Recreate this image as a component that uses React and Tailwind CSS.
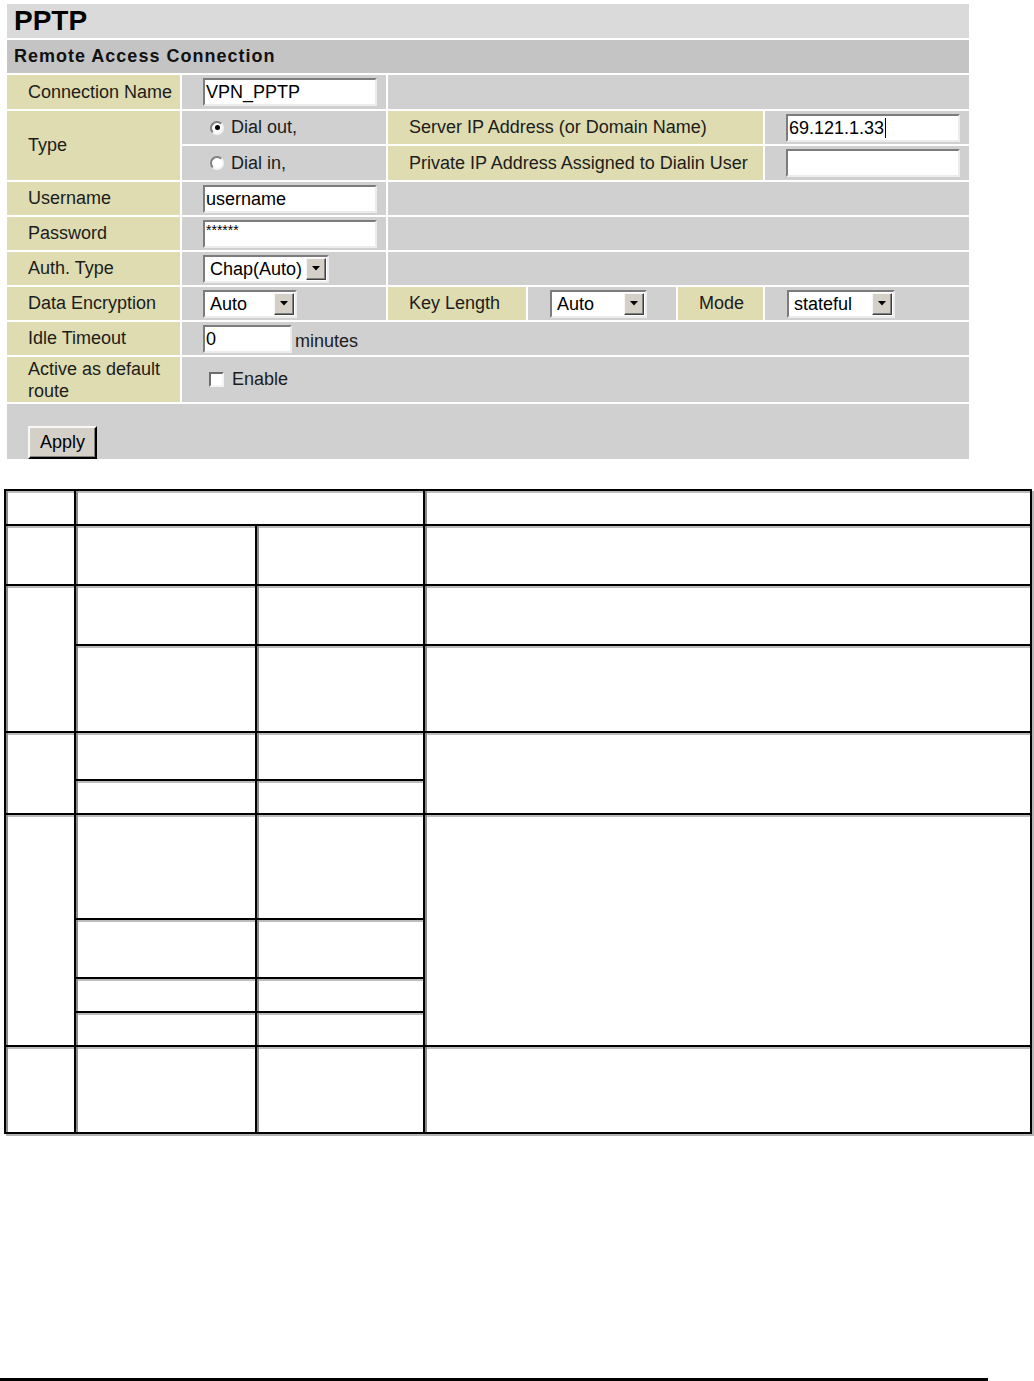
import React from "react";

const font = { fontFamily: '"Liberation Sans", Arial, sans-serif' };

function Tri() {
  return (
    <svg width="8" height="5" viewBox="0 0 8 5">
      <path d="M0 0 H8 L4 4.5 Z" fill="#000" />
    </svg>
  );
}

function Select({ w, value }) {
  return (
    <div className={`flex h-[28px] ${w} items-center border-2 border-[#7c7c7c] border-b-[#ececec] border-r-[#ececec] bg-white`}>
      <span className="flex-1 pl-[5px] text-[18px] leading-none text-black">{value}</span>
      <span className="mr-[1px] flex h-[22px] w-[20px] items-center justify-center border border-[#f6f6f6] border-b-[#404040] border-r-[#404040] bg-[#d4d0c8] shadow-[inset_-1px_-1px_0_#808080]">
        <Tri />
      </span>
    </div>
  );
}

function TextBox({ w, children, top }) {
  return (
    <div className={`flex h-[28px] ${w} ${top ? "items-start pt-[2px]" : "items-center"} border-2 border-[#7c7c7c] border-b-[#ececec] border-r-[#ececec] bg-white pl-[1px] text-[18px] leading-none text-black`}>
      {children}
    </div>
  );
}

function Radio({ checked }) {
  return (
    <span className="flex h-[14px] w-[14px] shrink-0 items-center justify-center rounded-full border-2 border-[#808080] border-b-[#f4f4f4] border-r-[#f4f4f4] bg-white">
      {checked ? <span className="h-[5px] w-[5px] rounded-full bg-black" /> : null}
    </span>
  );
}

const L = "flex items-center bg-[#dedcb0] pl-[21px] text-[18px] text-[#1c1c1c]";
const V = "flex items-center bg-[#d0d0d0]";

const cellBase =
  "border-b-2 border-r-2 border-black bg-white shadow-[inset_2px_0_0_#8c8c8c,inset_0_2px_0_#bcbcbc]";

const cells = [
  "col-start-1 row-start-1",
  "col-start-2 col-span-2 row-start-1",
  "col-start-4 row-start-1",
  "col-start-1 row-start-2",
  "col-start-2 row-start-2",
  "col-start-3 row-start-2",
  "col-start-4 row-start-2",
  "col-start-1 row-start-3 row-span-2",
  "col-start-2 row-start-3",
  "col-start-3 row-start-3",
  "col-start-4 row-start-3",
  "col-start-2 row-start-4",
  "col-start-3 row-start-4",
  "col-start-4 row-start-4",
  "col-start-1 row-start-5 row-span-2",
  "col-start-2 row-start-5",
  "col-start-3 row-start-5",
  "col-start-4 row-start-5 row-span-2",
  "col-start-2 row-start-6",
  "col-start-3 row-start-6",
  "col-start-1 row-start-7 row-span-4",
  "col-start-2 row-start-7",
  "col-start-3 row-start-7",
  "col-start-4 row-start-7 row-span-4",
  "col-start-2 row-start-8",
  "col-start-3 row-start-8",
  "col-start-2 row-start-9",
  "col-start-3 row-start-9",
  "col-start-2 row-start-10",
  "col-start-3 row-start-10",
  "col-start-1 row-start-11",
  "col-start-2 row-start-11",
  "col-start-3 row-start-11",
  "col-start-4 row-start-11",
];

export default function App() {
  return (
    <div className="flex h-[1381px] w-[1034px] flex-col overflow-hidden bg-white" style={font}>
      <div className="ml-[7px] mt-[4px] grid w-[962px] grid-cols-[173px_204px_138px_148px_85px_204px] grid-rows-[34px_33px_34px_33px_34px_33px_33px_33px_33px_33px_45px_55px] gap-[2px]">
        <div className="col-span-6 flex items-center bg-[#dadada] pl-[7px] text-[28px] font-bold leading-none text-black">
          PPTP
        </div>
        <div className="col-span-6 flex items-center bg-[#c4c4c4] pl-[7px] text-[18px] font-bold tracking-[1px] text-[#111]">
          Remote Access Connection
        </div>

        {/* Connection Name */}
        <div className={L}>Connection Name</div>
        <div className={`${V} pl-[21px]`}>
          <TextBox w="w-[174px]">VPN_PPTP</TextBox>
        </div>
        <div className={`${V} col-span-4`} />

        {/* Type */}
        <div className={`${L} row-span-2`}>Type</div>
        <div className={`${V} gap-[7px] pl-[28px] text-[18px] text-[#1c1c1c]`}>
          <Radio checked />
          <span>Dial out,</span>
        </div>
        <div className={`${L} col-span-3`}>Server IP Address (or Domain Name)</div>
        <div className={`${V} pl-[21px]`}>
          <TextBox w="w-[174px]">
            <span>69.121.1.33</span>
            <span className="ml-[1px] h-[20px] w-[1px] bg-black" />
          </TextBox>
        </div>
        <div className={`${V} gap-[7px] pl-[28px] text-[18px] text-[#1c1c1c]`}>
          <Radio />
          <span>Dial in,</span>
        </div>
        <div className={`${L} col-span-3`}>Private IP Address Assigned to Dialin User</div>
        <div className={`${V} pl-[21px]`}>
          <TextBox w="w-[174px]" />
        </div>

        {/* Username */}
        <div className={L}>Username</div>
        <div className={`${V} pl-[21px]`}>
          <TextBox w="w-[174px]">username</TextBox>
        </div>
        <div className={`${V} col-span-4`} />

        {/* Password */}
        <div className={L}>Password</div>
        <div className={`${V} pl-[21px]`}>
          <TextBox w="w-[174px]" top>
            <span className="text-[14px] leading-[12px]">******</span>
          </TextBox>
        </div>
        <div className={`${V} col-span-4`} />

        {/* Auth Type */}
        <div className={L}>Auth. Type</div>
        <div className={`${V} pl-[21px]`}>
          <Select w="w-[126px]" value="Chap(Auto)" />
        </div>
        <div className={`${V} col-span-4`} />

        {/* Data Encryption */}
        <div className={L}>Data Encryption</div>
        <div className={`${V} pl-[21px]`}>
          <Select w="w-[94px]" value="Auto" />
        </div>
        <div className={L}>Key Length</div>
        <div className={`${V} pl-[22px]`}>
          <Select w="w-[97px]" value="Auto" />
        </div>
        <div className={L}>Mode</div>
        <div className={`${V} pl-[22px]`}>
          <Select w="w-[108px]" value="stateful" />
        </div>

        {/* Idle Timeout */}
        <div className={L}>Idle Timeout</div>
        <div className={`${V} col-span-5 gap-[3px] pl-[21px] text-[18px] text-[#1c1c1c]`}>
          <TextBox w="w-[89px]">0</TextBox>
          <span className="mt-[6px]">minutes</span>
        </div>

        {/* Active as default route */}
        <div className={`${L} leading-[22px]`}>
          <span>
            Active as default
            <br />
            route
          </span>
        </div>
        <div className={`${V} col-span-5 gap-[8px] pl-[27px] text-[18px] text-[#1c1c1c]`}>
          <span className="h-[15px] w-[15px] shrink-0 border-2 border-[#6c6c6c] border-b-[#f4f4f4] border-r-[#f4f4f4] bg-white" />
          <span>Enable</span>
        </div>

        {/* Apply */}
        <div className="col-span-6 bg-[#d0d0d0] pl-[21px] pt-[22px]">
          <button className="flex h-[33px] w-[69px] items-center justify-center border-2 border-[#f8f8f8] border-b-[#000] border-r-[#000] bg-[#d4d0c8] text-[18px] text-black shadow-[inset_-1px_-1px_0_#808080]">
            Apply
          </button>
        </div>
      </div>

      <div className="ml-[4px] mt-[30px] grid w-[1028px] grid-cols-[70px_181px_168px_607px] grid-rows-[35px_60px_60px_87px_48px_34px_105px_59px_34px_34px_87px] border-l-2 border-t-2 border-black shadow-[2px_2px_0_#b4b4b4]">
        {cells.map((c, i) => (
          <div key={i} className={`${cellBase} ${c}`} />
        ))}
      </div>

      <div className="mt-auto h-[3px] w-[988px] bg-black" />
    </div>
  );
}
